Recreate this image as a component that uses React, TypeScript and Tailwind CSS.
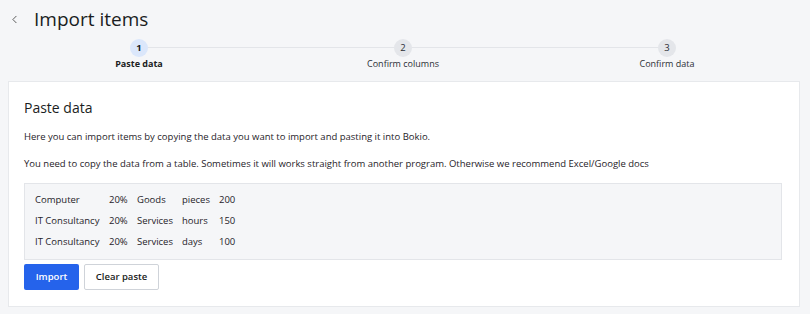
import { ChevronLeft } from 'lucide-react'

const steps = [
  { n: 1, label: 'Paste data', active: true },
  { n: 2, label: 'Confirm columns', active: false },
  { n: 3, label: 'Confirm data', active: false },
]

const rows = [
  ['Computer', '20%', 'Goods', 'pieces', '200'],
  ['IT Consultancy', '20%', 'Services', 'hours', '150'],
  ['IT Consultancy', '20%', 'Services', 'days', '100'],
]

export default function App() {
  return (
    <div className="min-h-[314px] bg-[#f5f6f8] text-[#1f2329]" style={{ fontFamily: '"Open Sans", "Noto Sans", sans-serif' }}>
      <div className="flex items-center h-[39px] pl-[8px]">
        <ChevronLeft className="h-[13px] w-[13px] text-[#444]" strokeWidth={1.6} />
        <h1 className="ml-[13px] text-[19px] leading-none text-[#1a1d22]">Import items</h1>
      </div>

      <div className="relative flex justify-between pl-[89px] pr-[93px]">
        <div className="absolute left-[139px] right-[143px] top-[8px] h-px bg-[#e3e5e9]" />
        {steps.map((s) => (
          <div key={s.n} className="relative flex flex-col items-center w-[100px]">
            <div
              className={`flex h-[18px] w-[18px] items-center justify-center rounded-full text-[9.5px] ${
                s.active ? 'bg-[#dbe7fb] font-bold text-[#1a1d22]' : 'bg-[#e4e6ea] text-[#2b2f36]'
              }`}
            >
              {s.n}
            </div>
            <div className={`mt-[1px] text-[9px] leading-[12px] whitespace-nowrap ${s.active ? 'font-bold text-[#1a1d22]' : 'text-[#2b2f36]'}`}>
              {s.label}
            </div>
          </div>
        ))}
      </div>

      <div className="mt-[11px] ml-[8px] mr-[10px] bg-white border border-[#e7e9ec] px-[15px] pt-[16px] pb-[16px]">
        <h2 className="text-[14px] leading-[20px] text-[#1a1d22]">Paste data</h2>
        <p className="mt-[11px] text-[9.5px] leading-[16px]">
          Here you can import items by copying the data you want to import and pasting it into Bokio.
        </p>
        <p className="mt-[11px] text-[9.5px] leading-[16px]">
          You need to copy the data from a table. Sometimes it will works straight from another program. Otherwise we recommend Excel/Google docs
        </p>
        <div className="mt-[11px] mr-[2px] border border-[#e3e5e9] bg-[#f5f6f8] px-[10px] py-[6px] text-[9.5px]">
          {rows.map((r, i) => (
            <div key={i} className="grid grid-cols-[74px_28px_45px_37px_auto] h-[21px] items-center">
              {r.map((c, j) => (
                <span key={j} className="whitespace-nowrap">
                  {c}
                </span>
              ))}
            </div>
          ))}
        </div>
        <div className="mt-[4px] flex gap-[5px]">
          <button className="h-[26px] w-[55px] rounded-[2px] bg-[#2563eb] text-white text-[9.5px] font-semibold">Import</button>
          <button className="h-[26px] w-[75px] rounded-[2px] border border-[#cfd3d9] bg-white text-[9.5px] font-semibold text-[#1a1d22]">
            Clear paste
          </button>
        </div>
      </div>
    </div>
  )
}
